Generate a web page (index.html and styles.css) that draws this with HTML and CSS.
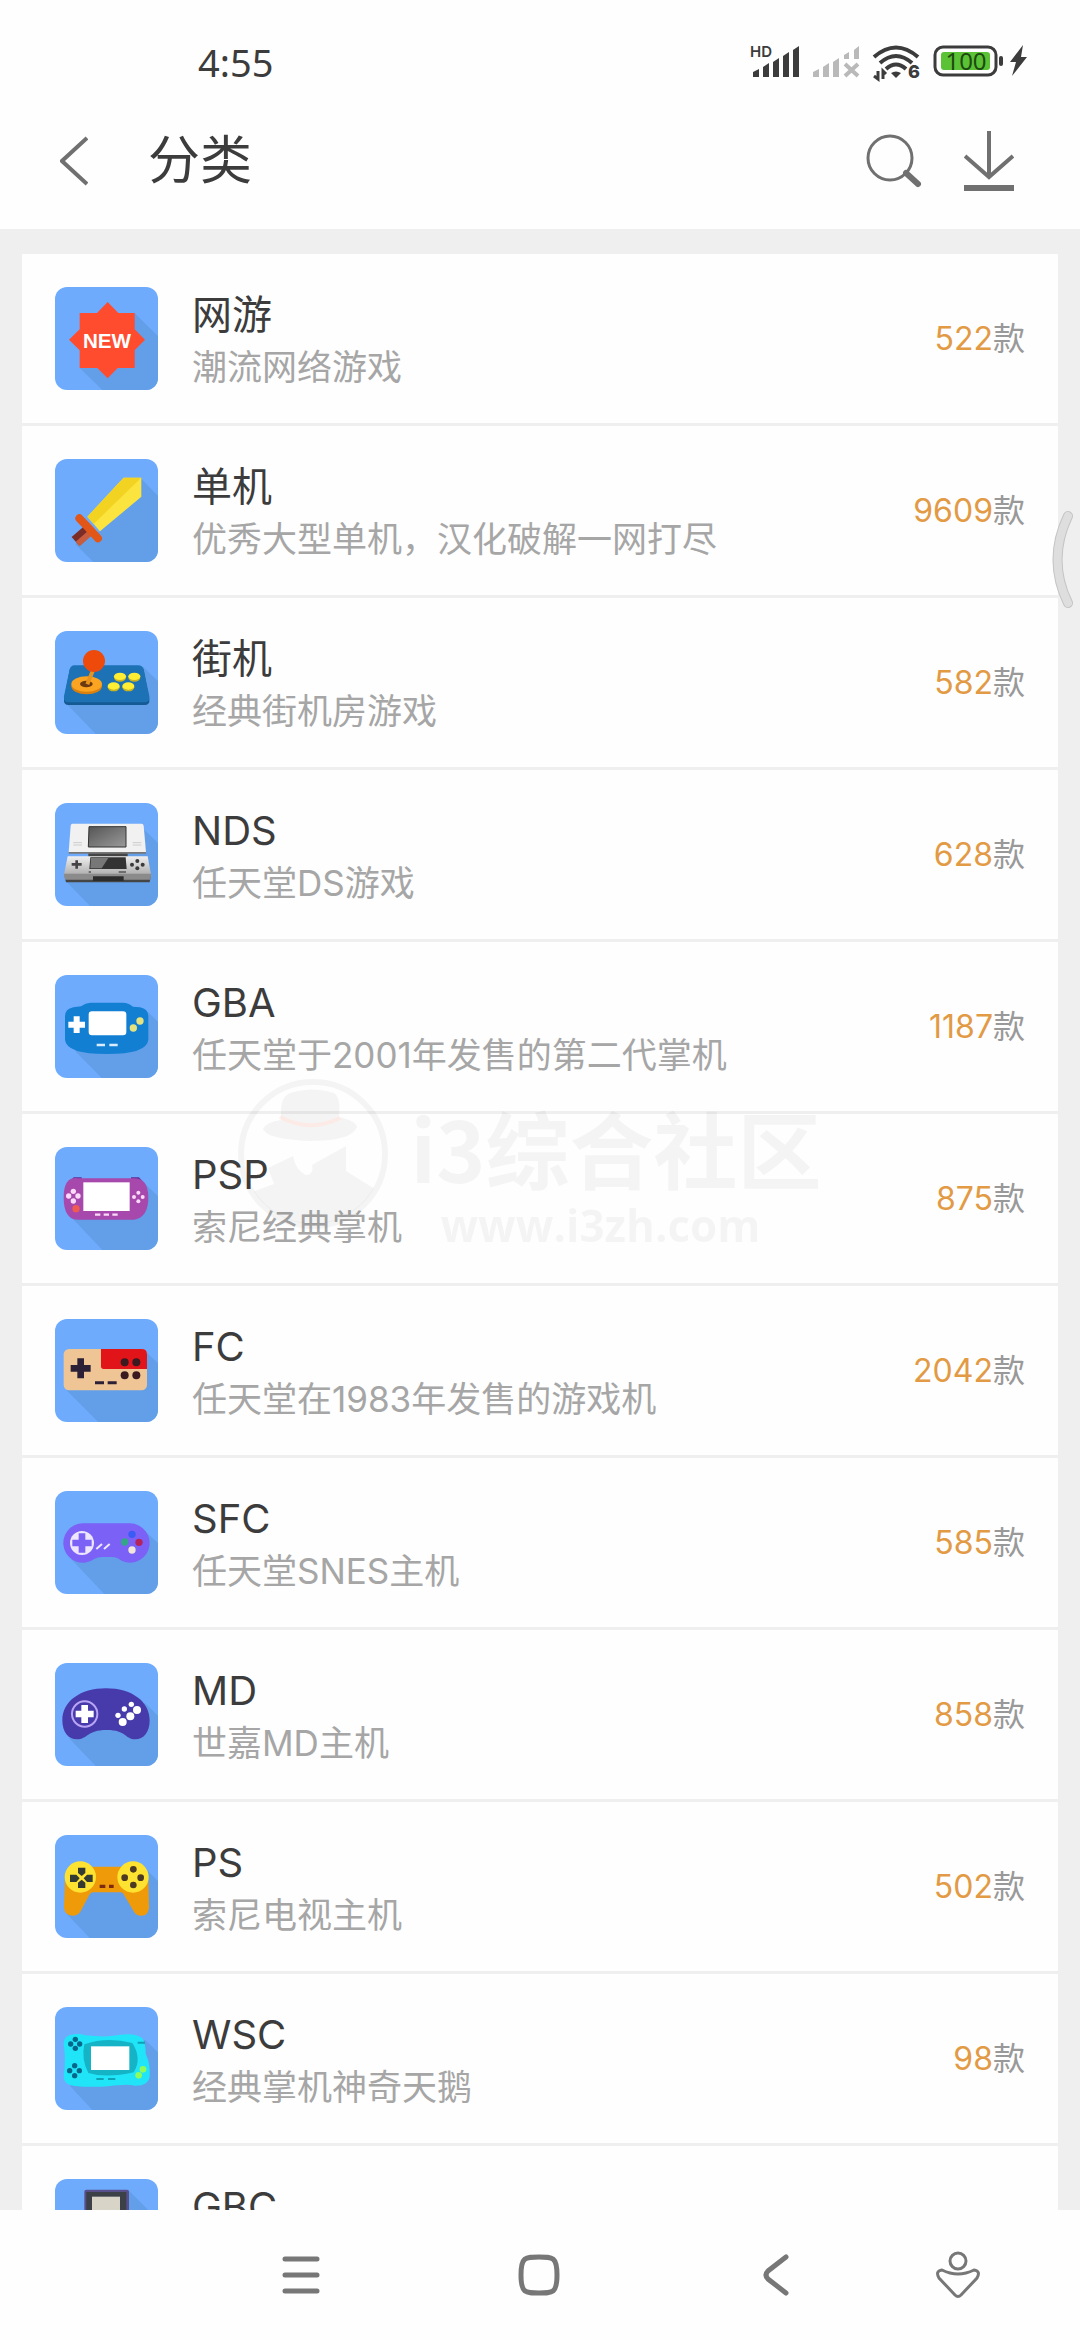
FILE: index.html
```html
<!DOCTYPE html>
<html lang="zh-CN">
<head>
  <meta charset="UTF-8">
  <meta name="viewport" content="width=device-width, initial-scale=1.0">
  <title>分类</title>
  <link rel="stylesheet" href="styles.css">
</head>
<body>

<div class="status-bar">
  <span class="clock">4:55</span>
  <div class="status-icons">
    <svg width="50" height="34" viewBox="0 0 50 34" fill="#3c3c3c">
      <text class="hd" x="0" y="12">HD</text>
      <path d="M3 27l6-3v8H3zM13 22l6-4v14h-6zM23 17l6-4v19h-6zM33 11l6-4v25h-6zM43 5l6-4v31h-6z"/>
    </svg>
    <svg width="48" height="34" viewBox="0 0 48 34" fill="#b9b9b9">
      <path d="M1 27l6-3v8H1zM11 22l6-4v14h-6zM21 17l6-4v19h-6zM32 10l5-3v7h-5zM42 5l5-4v13h-5z"/>
      <path d="M33 19l13 12M46 19L33 31" stroke="#b9b9b9" stroke-width="4"/>
    </svg>
    <svg width="48" height="34" viewBox="0 0 48 34" fill="none" stroke="#3c3c3c" stroke-width="4">
      <path d="M2 12Q24-7 46 12M8 18Q24 4 40 18M14 24Q24 15 34 24"/>
      <path d="M19 28q5-3 10 0l-5 5z" fill="#3c3c3c" stroke="none"/>
      <path d="M6 26v8l-4-3M11 34v-8l3 3" stroke-width="3"/>
      <text class="wifi-six" x="36" y="33" fill="#3c3c3c" stroke="none">6</text>
    </svg>
    <svg width="96" height="34" viewBox="0 0 96 34">
      <rect x="3" y="2" width="61" height="28" rx="8" fill="#fff" stroke="#3c3c3c" stroke-width="3"/>
      <rect x="9" y="7" width="49" height="18" rx="3" fill="#5bc236"/>
      <rect x="67" y="11" width="4" height="10" rx="2" fill="#3c3c3c"/>
      <text class="battery" x="34" y="25" text-anchor="middle">100</text>
      <path d="M91 0L78 17h6l-4 14 15-19h-6z" fill="#3c3c3c"/>
    </svg>
  </div>
</div>

<header>
  <button class="icon-btn" aria-label="返回">
    <svg width="28" height="50" viewBox="0 0 28 50"><path d="M27 2L2 25l25 23" fill="none" stroke="#707070" stroke-width="4"/></svg>
  </button>
  <h1>分类</h1>
  <div class="actions">
    <button class="icon-btn" aria-label="搜索">
      <svg width="56" height="54" viewBox="0 0 56 54" fill="none" stroke="#707070">
        <circle cx="24" cy="24" r="22" stroke-width="3"/>
        <path d="M40 39l12 11" stroke-width="6" stroke-linecap="round"/>
      </svg>
    </button>
    <button class="icon-btn" aria-label="下载">
      <svg width="50" height="62" viewBox="0 0 50 62" fill="none" stroke="#707070" stroke-width="4">
        <path d="M25 1v47M1 26l24 21 24-21"/>
        <path d="M0 58h50" stroke-width="6"/>
      </svg>
    </button>
  </div>
</header>

<main>
  <ul class="category-list">
    <li><a class="category" href="#">
      <svg class="thumb" viewBox="0 0 309 309">
        <path class="shade" d="M239 78L309 148V309H142L74 243z"/>
        <path fill="#ff4b2e" d="M158 45L190 78H239V127L270 158 239 190V243H188L158 274 127 243H74V190L42 158 74 127V78H126z"/>
        <text class="new" x="156" y="184" text-anchor="middle">NEW</text>
      </svg>
      <div class="info"><h2>网游</h2><p>潮流网络游戏</p></div>
      <div class="count"><b>522</b>款</div>
    </a></li>
    <li><a class="category" href="#">
      <svg class="thumb" viewBox="0 0 309 309">
        <path class="shade" d="M259 60L309 110V309H115L60 255 135 217z"/>
        <path fill="#fce43f" d="M97 173L206 56H259V113L135 217z"/>
        <path fill="#f3d321" d="M97 173L206 56H259L116 195z"/>
        <path d="M101 212L61 247" stroke="#7c2c27" stroke-width="34"/>
        <path d="M108 220L68 255" stroke="#c75c3e" stroke-width="18"/>
        <path d="M73 178q28 28 56 60" stroke="#e25717" stroke-width="24" stroke-linecap="round" fill="none"/>
      </svg>
      <div class="info"><h2>单机</h2><p>优秀大型单机，汉化破解一网打尽</p></div>
      <div class="count"><b>9609</b>款</div>
    </a></li>
    <li><a class="category" href="#">
      <svg class="thumb" viewBox="0 0 309 309">
        <path class="shade" d="M265 108L309 150V309H122L33 217z"/>
        <path fill="#165a94" d="M58 106H250q12 0 16 12L283 204q2 18-14 18H41q-16 0-14-18L44 118q4-12 14-12z"/>
        <path fill="#1c72b5" d="M58 103H250q12 0 16 12L283 196q2 18-14 18H41q-16 0-14-18L44 115q4-12 14-12z"/>
        <ellipse cx="95" cy="166" rx="46" ry="24" fill="#d9800f"/>
        <ellipse cx="95" cy="159" rx="46" ry="23" fill="#fba421"/>
        <ellipse cx="94" cy="159" rx="19" ry="10" fill="#6b3a12"/>
        <path d="M114 118L97 160" stroke="#e8931c" stroke-width="12"/>
        <circle cx="117" cy="90" r="33" fill="#ed4a0c"/>
        <g fill="#c9b31f"><ellipse cx="195" cy="140" rx="18" ry="12"/><ellipse cx="238" cy="140" rx="18" ry="12"/><ellipse cx="176" cy="169" rx="18" ry="12"/><ellipse cx="220" cy="169" rx="18" ry="12"/></g>
        <g fill="#ffee33"><ellipse cx="195" cy="136" rx="18" ry="11"/><ellipse cx="238" cy="136" rx="18" ry="11"/><ellipse cx="176" cy="165" rx="18" ry="11"/><ellipse cx="220" cy="165" rx="18" ry="11"/></g>
      </svg>
      <div class="info"><h2>街机</h2><p>经典街机房游戏</p></div>
      <div class="count"><b>582</b>款</div>
    </a></li>
    <li><a class="category" href="#">
      <svg class="thumb" viewBox="0 0 309 309">
        <defs>
          <linearGradient id="lcd" x1="0" y1="0" x2="1" y2="1"><stop offset="0" stop-color="#555"/><stop offset="1" stop-color="#9a9a9a"/></linearGradient>
          <linearGradient id="shell" x1="0" y1="0" x2="0" y2="1"><stop offset="0" stop-color="#efefef"/><stop offset="1" stop-color="#a9a9a9"/></linearGradient>
        </defs>
        <path class="shade" d="M268 80L309 120V309H105L30 232z"/>
        <path fill="#444" d="M100 145H218V166H100z"/>
        <path fill="#777" d="M52 66H262L273 152H41z"/>
        <path fill="#f1f1f1" d="M52 62H260q5 0 6 6L273 147H41L47 68q1-6 5-6z"/>
        <path fill="url(#lcd)" stroke="#333" stroke-width="3" d="M102 71H213V132H100z"/>
        <path d="M55 119h26M55 126h26M233 119h26M233 126h26" stroke="#ccc" stroke-width="3"/>
        <path fill="#454545" d="M28 215H288L284 238H33z"/>
        <path fill="url(#shell)" d="M38 160H278L289 220H26z"/>
        <path fill="#8b8b8b" d="M26 212H289L286 230H30z"/>
        <path fill="#333" d="M106 163H212L215 198H103z"/>
        <path fill="#777" d="M108 165H160L140 196H106z"/>
        <path fill="#2c2c2c" d="M114 220H206V234H114z"/>
        <path d="M65 172v25M50 184h30" stroke="#444" stroke-width="8"/>
        <g fill="#3a3a3a"><circle cx="247" cy="174" r="6"/><circle cx="247" cy="196" r="6"/><circle cx="231" cy="185" r="6"/><circle cx="263" cy="185" r="6"/></g>
        <path d="M191 207h22M101 207h7" stroke="#555" stroke-width="5"/>
      </svg>
      <div class="info"><h2>NDS</h2><p>任天堂DS游戏</p></div>
      <div class="count"><b>628</b>款</div>
    </a></li>
    <li><a class="category" href="#">
      <svg class="thumb" viewBox="0 0 309 309">
        <path class="shade" d="M278 110L309 140V309H140L60 228z"/>
        <path fill="#127fd2" d="M78 94Q92 83 106 83H204Q220 83 234 95L255 97Q280 102 280 124V194Q276 237 155 237T30 194V124Q30 102 55 97z"/>
        <rect x="101" y="109" width="113" height="72" rx="10" fill="#fff"/>
        <path d="M65 124v50M40 149h50" stroke="#fff" stroke-width="18" stroke-linecap="butt"/>
        <g fill="#e6e27e"><circle cx="255" cy="138" r="11"/><circle cx="235" cy="159" r="11"/></g>
        <path d="M125 210h25M163 210h25" stroke="#d9edff" stroke-width="7"/>
      </svg>
      <div class="info"><h2>GBA</h2><p>任天堂于2001年发售的第二代掌机</p></div>
      <div class="count"><b>1187</b>款</div>
    </a></li>
    <li><a class="category" href="#">
      <svg class="thumb" viewBox="0 0 309 309">
        <path class="shade" d="M268 108L309 148V309H142L50 212z"/>
        <path fill="#5b2f9c" d="M44 104L56 91H80V110zM264 104L252 91H228V110z"/>
        <path fill="#a648ac" d="M70 94H238Q280 94 280 152T238 218H70Q26 218 26 152T70 94z"/>
        <rect x="85" y="106" width="139" height="86" fill="#fff"/>
        <g fill="#fbd9f8"><circle cx="55" cy="133" r="8"/><circle cx="55" cy="162" r="8"/><circle cx="41" cy="147" r="8"/><circle cx="69" cy="147" r="8"/>
        <circle cx="250" cy="137" r="6"/><circle cx="250" cy="163" r="6"/><circle cx="237" cy="150" r="6"/><circle cx="263" cy="150" r="6"/></g>
        <circle cx="63" cy="185" r="11" fill="#f05a50"/>
        <path d="M120 203h16M146 203h16M172 203h16" stroke="#fbd9f8" stroke-width="7"/>
      </svg>
      <div class="info"><h2>PSP</h2><p>索尼经典掌机</p></div>
      <div class="count"><b>875</b>款</div>
    </a></li>
    <li><a class="category" href="#">
      <svg class="thumb" viewBox="0 0 309 309">
        <path class="shade" d="M272 98L309 132V309H130L34 213z"/>
        <rect x="26" y="90" width="250" height="124" rx="16" fill="#efc596"/>
        <path fill="#e01419" d="M138 90H260q16 0 16 16V150H146q-8 0-8-8z"/>
        <path d="M77 118v60M47 148h60" stroke="#2b2035" stroke-width="20" />
        <g fill="#3a1a20"><circle cx="209" cy="130" r="12"/><circle cx="244" cy="130" r="12"/><circle cx="209" cy="169" r="12"/><circle cx="244" cy="169" r="12"/></g>
        <path d="M120 191h27M158 191h27" stroke="#2b2035" stroke-width="9"/>
      </svg>
      <div class="info"><h2>FC</h2><p>任天堂在1983年发售的游戏机</p></div>
      <div class="count"><b>2042</b>款</div>
    </a></li>
    <li><a class="category" href="#">
      <svg class="thumb" viewBox="0 0 309 309">
        <path class="shade" d="M270 120L309 156V309H148L48 204z"/>
        <path fill="#7b61f6" d="M85 97H224A59 59 0 1 1 188 202Q180 198 170 198H142Q128 198 118 204A59 59 0 1 1 85 97z"/>
        <circle cx="81" cy="156" r="36" fill="#eee6ff"/>
        <path d="M81 127v58M52 156h58" stroke="#7b61f6" stroke-width="20"/>
        <path d="M124 174l17-15M147 174l17-15" stroke="#eee6ff" stroke-width="6"/>
        <circle cx="231" cy="130" r="11" fill="#3b5bf5"/><circle cx="209" cy="153" r="11" fill="#35a58a"/>
        <circle cx="252" cy="154" r="11" fill="#b3245c"/><circle cx="231" cy="177" r="11" fill="#f1e5dc"/>
      </svg>
      <div class="info"><h2>SFC</h2><p>任天堂SNES主机</p></div>
      <div class="count"><b>585</b>款</div>
    </a></li>
    <li><a class="category" href="#">
      <svg class="thumb" viewBox="0 0 309 309">
        <path class="shade" d="M270 120L309 158V309H122L42 226z"/>
        <path fill="#473bab" d="M153 76C230 76 284 115 284 172C284 208 266 229 241 229C210 229 215 201 155 201C95 201 98 229 66 229C40 229 22 208 22 172C22 115 76 76 153 76z"/>
        <circle cx="89" cy="153" r="38" fill="none" stroke="#b9a4f5" stroke-width="6"/>
        <path d="M89 126v54M62 153h54" stroke="#fff" stroke-width="20"/>
        <g fill="#fff"><circle cx="229" cy="124" r="8"/><circle cx="208" cy="138" r="8"/><circle cx="189" cy="157" r="8"/>
        <circle cx="246" cy="141" r="12"/><circle cx="226" cy="160" r="12"/><circle cx="203" cy="177" r="12"/></g>
      </svg>
      <div class="info"><h2>MD</h2><p>世嘉MD主机</p></div>
      <div class="count"><b>858</b>款</div>
    </a></li>
    <li><a class="category" href="#">
      <svg class="thumb" viewBox="0 0 309 309">
        <path class="shade" d="M270 100L309 138V309H104L36 238 100 160z"/>
        <path fill="#ef9a08" d="M90 95H220L280 130 282 218Q280 242 259 242Q244 242 237 230L205 176Q202 172 196 172H114Q108 172 104 178L76 230Q68 242 52 242Q28 242 27 216L30 130z"/>
        <g fill="#fde231"><circle cx="76" cy="126" r="47"/><circle cx="234" cy="126" r="47"/></g>
        <g fill="#333a33"><path d="M69 98h22v16l-11 9-11-9zM69 159h22v-16l-11-9-11 9zM45 119h19l10 11-10 11H45zM113 119H96l-10 11 10 11h17z"/></g>
        <g fill="#4d3a22"><circle cx="235" cy="103" r="10"/><circle cx="209" cy="128" r="10"/><circle cx="257" cy="128" r="10"/><circle cx="235" cy="150" r="10"/></g>
        <path d="M134 154h17M162 154h14" stroke="#7c2a10" stroke-width="10"/>
      </svg>
      <div class="info"><h2>PS</h2><p>索尼电视主机</p></div>
      <div class="count"><b>502</b>款</div>
    </a></li>
    <li><a class="category" href="#">
      <svg class="thumb" viewBox="0 0 309 309">
        <path class="shade" d="M270 98L309 136V309H112L44 236z"/>
        <path fill="#20e5f9" d="M56 82Q74 79 90 85Q155 92 190 84Q240 76 262 94Q272 108 272 140Q286 170 284 206Q282 236 240 236Q215 230 160 238Q100 242 56 236Q26 234 26 205Q34 160 26 112Q26 84 56 82z"/>
        <path fill="#14b3c6" d="M88 112Q155 88 232 108Q262 155 236 196Q155 214 100 198Q78 155 88 112z"/>
        <rect x="108" y="118" width="115" height="71" fill="#fff"/>
        <g fill="#07668a"><circle cx="61" cy="97" r="8"/><circle cx="61" cy="124" r="8"/><circle cx="47" cy="111" r="8"/><circle cx="74" cy="111" r="8"/>
        <circle cx="59" cy="176" r="8"/><circle cx="59" cy="206" r="8"/><circle cx="44" cy="191" r="8"/><circle cx="73" cy="191" r="8"/></g>
        <g fill="#8dfc5c"><circle cx="264" cy="187" r="10"/><circle cx="251" cy="205" r="10"/></g>
        <path d="M124 216h22M159 216h22M248 107h22" stroke="#0fa0b5" stroke-width="6"/>
      </svg>
      <div class="info"><h2>WSC</h2><p>经典掌机神奇天鹅</p></div>
      <div class="count"><b>98</b>款</div>
    </a></li>
    <li><a class="category" href="#">
      <svg class="thumb" viewBox="0 0 309 309">
        <path class="shade" d="M221 34L309 122V309H88z"/>
        <rect x="88" y="32" width="134" height="240" rx="6" fill="#57508c"/>
        <rect x="94" y="39" width="120" height="110" fill="#3c4047"/>
        <rect x="111" y="53" width="84" height="80" fill="#d8d5c8"/>
      </svg>
      <div class="info"><h2>GBC</h2></div>
    </a></li>
  </ul>
</main>

<nav>
  <button class="icon-btn" aria-label="菜单">
    <svg width="38" height="38" viewBox="0 0 38 38"><path d="M3 3h32M3 19h32M3 35h32" stroke="#777" stroke-width="5" stroke-linecap="round"/></svg>
  </button>
  <button class="icon-btn" aria-label="主页">
    <svg width="42" height="42" viewBox="0 0 42 42"><path d="M21 3C35 3 39 3 39 21S35 39 21 39 3 39 3 21 7 3 21 3z" fill="none" stroke="#777" stroke-width="5"/></svg>
  </button>
  <button class="icon-btn" aria-label="后退">
    <svg width="26" height="42" viewBox="0 0 26 42"><path d="M23 3L5 17q-4 4 0 8l18 14" fill="none" stroke="#777" stroke-width="5" stroke-linecap="round"/></svg>
  </button>
  <button class="icon-btn" aria-label="辅助功能">
    <svg width="44" height="48" viewBox="0 0 44 48" fill="none" stroke="#777" stroke-width="3">
      <circle cx="22" cy="10" r="8"/>
      <path d="M6 19Q22 27 38 19Q45 20 41 27L25 44Q22 47 19 44L3 27Q-1 20 6 19z"/>
    </svg>
  </button>
</nav>

<div class="watermark" aria-hidden="true">
  <svg class="watermark-logo" width="150" height="150" viewBox="0 0 150 150">
    <defs><clipPath id="ring"><circle cx="75" cy="75" r="70"/></clipPath></defs>
    <circle cx="75" cy="75" r="72" fill="none" stroke="currentColor" stroke-width="6"/>
    <path fill="currentColor" d="M43 36Q42 18 52 14Q75 7 96 14Q103 18 101 38Q118 42 119 48Q114 62 72 62Q28 60 25 50Q28 43 43 41z"/>
    <path fill="none" stroke="#ffe3dc" stroke-width="4" opacity=".6" d="M42 38Q72 54 102 39"/>
    <path fill="currentColor" clip-path="url(#ring)" d="M30 89L55 77Q58 92 68 96Q76 96 74 86L79 83 108 67V92L150 118V150H0V118L36 105z"/>
  </svg>
  <div class="watermark-text">
    <strong>i3综合社区</strong>
    <span>www.i3zh.com</span>
  </div>
</div>

<svg class="edge-handle" width="22" height="100" viewBox="0 0 22 100" fill="none" stroke-linecap="round">
  <path d="M16 6Q-5 50 16 93" stroke="#c4c4c4" stroke-width="10"/>
  <path d="M16 6Q-5 50 16 93" stroke="#dedede" stroke-width="8"/>
</svg>

</body>
</html>
```
FILE: styles.css
```css
* {
  box-sizing: border-box;
}
body {
  margin: 0;
  height: 100vh;
  display: flex;
  flex-direction: column;
  position: relative;
  overflow: hidden;
  background-color: #fefefe;
  color: #3c3c3c;
  font-family: Inter, "Noto Sans CJK SC", sans-serif;
}
h1, h2, p, ul {
  margin: 0;
  padding: 0;
  font-weight: 400;
}
svg {
  display: block;
}
.icon-btn {
  display: flex;
  align-items: center;
  justify-content: center;
  padding: 0;
  border: none;
  background: none;
  cursor: pointer;
}

/* 状态栏 */
.status-bar {
  display: flex;
  align-items: center;
  justify-content: space-between;
  padding: 31px 52px 0 198px;
  height: 93px;
  flex-shrink: 0;
}
.clock {
  font-family: "Noto Sans", sans-serif;
  font-size: 38px;
  line-height: 62px;
}
.status-icons {
  display: flex;
  gap: 12px;
}
.status-icons svg {
  overflow: visible;
}
.hd {
  font-size: 15px;
  font-weight: 600;
}
.wifi-six {
  font-size: 18px;
  font-weight: 800;
}
.battery {
  font-family: "Noto Sans", sans-serif;
  font-size: 24px;
  fill: #1c4a10;
}

/* 标题栏 */
header {
  display: flex;
  align-items: center;
  height: 136px;
  padding: 0 66px 0 60px;
  flex-shrink: 0;
}
header h1 {
  margin-left: 60px;
  font-size: 52px;
  line-height: 64px;
}
.actions {
  display: flex;
  gap: 42px;
  margin-left: auto;
}

/* 分类列表 */
main {
  flex: 1;
  min-height: 0;
  padding: 25px 22px 0;
  overflow-y: auto;
  scrollbar-width: none;
  background-color: #efefef;
}
.category-list {
  list-style: none;
}
.category {
  display: flex;
  align-items: center;
  padding: 33px;
  border-bottom: 3px solid #efefef;
  background-color: #fefefe;
  color: inherit;
  text-decoration: none;
}
.thumb {
  width: 103px;
  height: 103px;
  border-radius: 12px;
  background-color: #6fabfd;
  flex-shrink: 0;
}
.shade {
  fill: #639fe8;
}
.new {
  font-family: "Liberation Sans", sans-serif;
  font-size: 62px;
  font-weight: 700;
  fill: #fff;
}
.info {
  display: grid;
  grid-template-rows: 52px 51px;
  flex: 1;
  margin-left: 34px;
}
.info h2 {
  font-size: 40px;
  line-height: 56px;
}
.info p {
  font-size: 35px;
  line-height: 56px;
  color: #a6a6a6;
}
.count {
  font-size: 32px;
  line-height: 52px;
  color: #999;
}
.count b {
  font-weight: 400;
  color: #e29a45;
}

/* 底部导航 */
nav {
  display: grid;
  grid-template-columns: 238fr 238fr 238fr 126fr;
  height: 130px;
  padding: 0 59px 0 182px;
  flex-shrink: 0;
}

/* 水印和侧边手势条 */
.watermark {
  position: absolute;
  inset: 0;
  display: flex;
  align-items: center;
  justify-content: center;
  gap: 22px;
  padding-right: 20px;
  color: rgba(0, 0, 0, 0.04);
  pointer-events: none;
}
.watermark-logo {
  margin-bottom: 32px;
}
.watermark-text {
  display: flex;
  flex-direction: column;
  padding-top: 26px;
}
.watermark strong {
  font-family: "Noto Sans CJK SC", sans-serif;
  font-size: 84px;
  line-height: 84px;
}
.watermark span {
  padding-left: 30px;
  font-family: "Open Sans", sans-serif;
  font-size: 44px;
  font-weight: 700;
  line-height: 72px;
}
.edge-handle {
  position: absolute;
  top: 510px;
  right: 6px;
}
```
